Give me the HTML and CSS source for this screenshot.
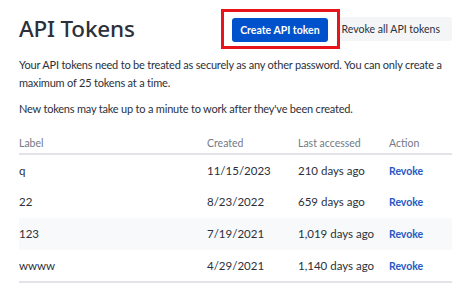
FILE: index.html
```html
<!DOCTYPE html>
<html lang="en">
<head>
    <meta charset="UTF-8">
    <meta name="viewport" content="width=device-width, initial-scale=1.0">
    <title>API Tokens</title>
    <link rel="stylesheet" href="styles.css">
</head>
<body>
    <main class="page">
        <header class="page-header">
            <h1>API Tokens</h1>
            <div class="actions">
                <span class="highlight-box">
                    <button class="btn btn-primary">Create API token</button>
                </span>
                <button class="btn btn-subtle">Revoke all API tokens</button>
            </div>
        </header>

        <p class="intro">Your API tokens need to be treated as securely as any other password. You can only create a maximum of 25 tokens at a time.</p>
        <p class="intro">New tokens may take up to a minute to work after they've been created.</p>

        <table class="tokens">
            <thead>
                <tr>
                    <th class="col-label">Label</th>
                    <th class="col-created">Created</th>
                    <th class="col-accessed">Last accessed</th>
                    <th class="col-action">Action</th>
                </tr>
            </thead>
            <tbody>
                <tr>
                    <td>q</td>
                    <td>11/15/2023</td>
                    <td>210 days ago</td>
                    <td><a href="#" class="revoke">Revoke</a></td>
                </tr>
                <tr>
                    <td>22</td>
                    <td>8/23/2022</td>
                    <td>659 days ago</td>
                    <td><a href="#" class="revoke">Revoke</a></td>
                </tr>
                <tr class="is-hover">
                    <td>123</td>
                    <td>7/19/2021</td>
                    <td>1,019 days ago</td>
                    <td><a href="#" class="revoke">Revoke</a></td>
                </tr>
                <tr>
                    <td>wwww</td>
                    <td>4/29/2021</td>
                    <td>1,140 days ago</td>
                    <td><a href="#" class="revoke">Revoke</a></td>
                </tr>
            </tbody>
        </table>
    </main>
</body>
</html>
```

FILE: styles.css
```css
/* Base */
* {
    margin: 0;
    padding: 0;
    box-sizing: border-box;
}

:root {
    --text: #2B303B;
    --subtle: #737A86;
    --primary: #0052CC;
    --link: #2857C4;
    --border: #E2E4E8;
    --neutral: #F4F5F7;
}

body {
    font-family: Lato, 'Noto Sans', sans-serif;
    color: var(--text);
    background: #fff;
    font-size: 11.5px;
    line-height: 18px;
}

.page {
    width: 433px;
    margin-left: 19px;
}

/* Header */
.page-header {
    display: flex;
    align-items: center;
    height: 56px;
    padding-top: 2px;
}

.page-header h1 {
    flex: 1;
    font-family: 'Noto Sans', sans-serif;
    font-size: 22.5px;
    font-weight: 500;
    letter-spacing: -0.2px;
}

.actions {
    display: flex;
    align-items: center;
}

.highlight-box {
    display: inline-block;
    border: 3px solid #E8141B;
    padding: 6px 9px 4px 8px;
}

.btn {
    font-family: inherit;
    height: 24px;
    border: none;
    border-radius: 3px;
    cursor: pointer;
    display: block;
}

.btn-primary {
    background: var(--primary);
    color: #fff;
    font-size: 10.5px;
    font-weight: 700;
    padding: 0 8px;
}

.btn-subtle {
    background: var(--neutral);
    color: var(--text);
    font-size: 10.5px;
    padding: 0 12px 0 2px;
}

/* Intro text */
.intro {
    font-size: 11px;
    letter-spacing: -0.2px;
    margin-bottom: 8px;
}

/* Tokens table */
.tokens {
    width: 100%;
    border-collapse: collapse;
    margin-top: 18px;
    border-bottom: 2px solid var(--border);
}

.tokens th {
    text-align: left;
    font-weight: 400;
    color: var(--subtle);
    font-size: 10.5px;
    line-height: 14px;
    padding: 0 0 3px;
    border-bottom: 2px solid var(--border);
}

.col-label { width: 188px; }
.col-created { width: 91px; }
.col-accessed { width: 91px; }

.tokens td {
    height: 32px;
    padding: 0;
}

.tokens tr.is-hover td {
    background: #F8F9FA;
}

.revoke {
    color: var(--link);
    font-size: 10.5px;
    font-weight: 700;
    text-decoration: none;
}
```
